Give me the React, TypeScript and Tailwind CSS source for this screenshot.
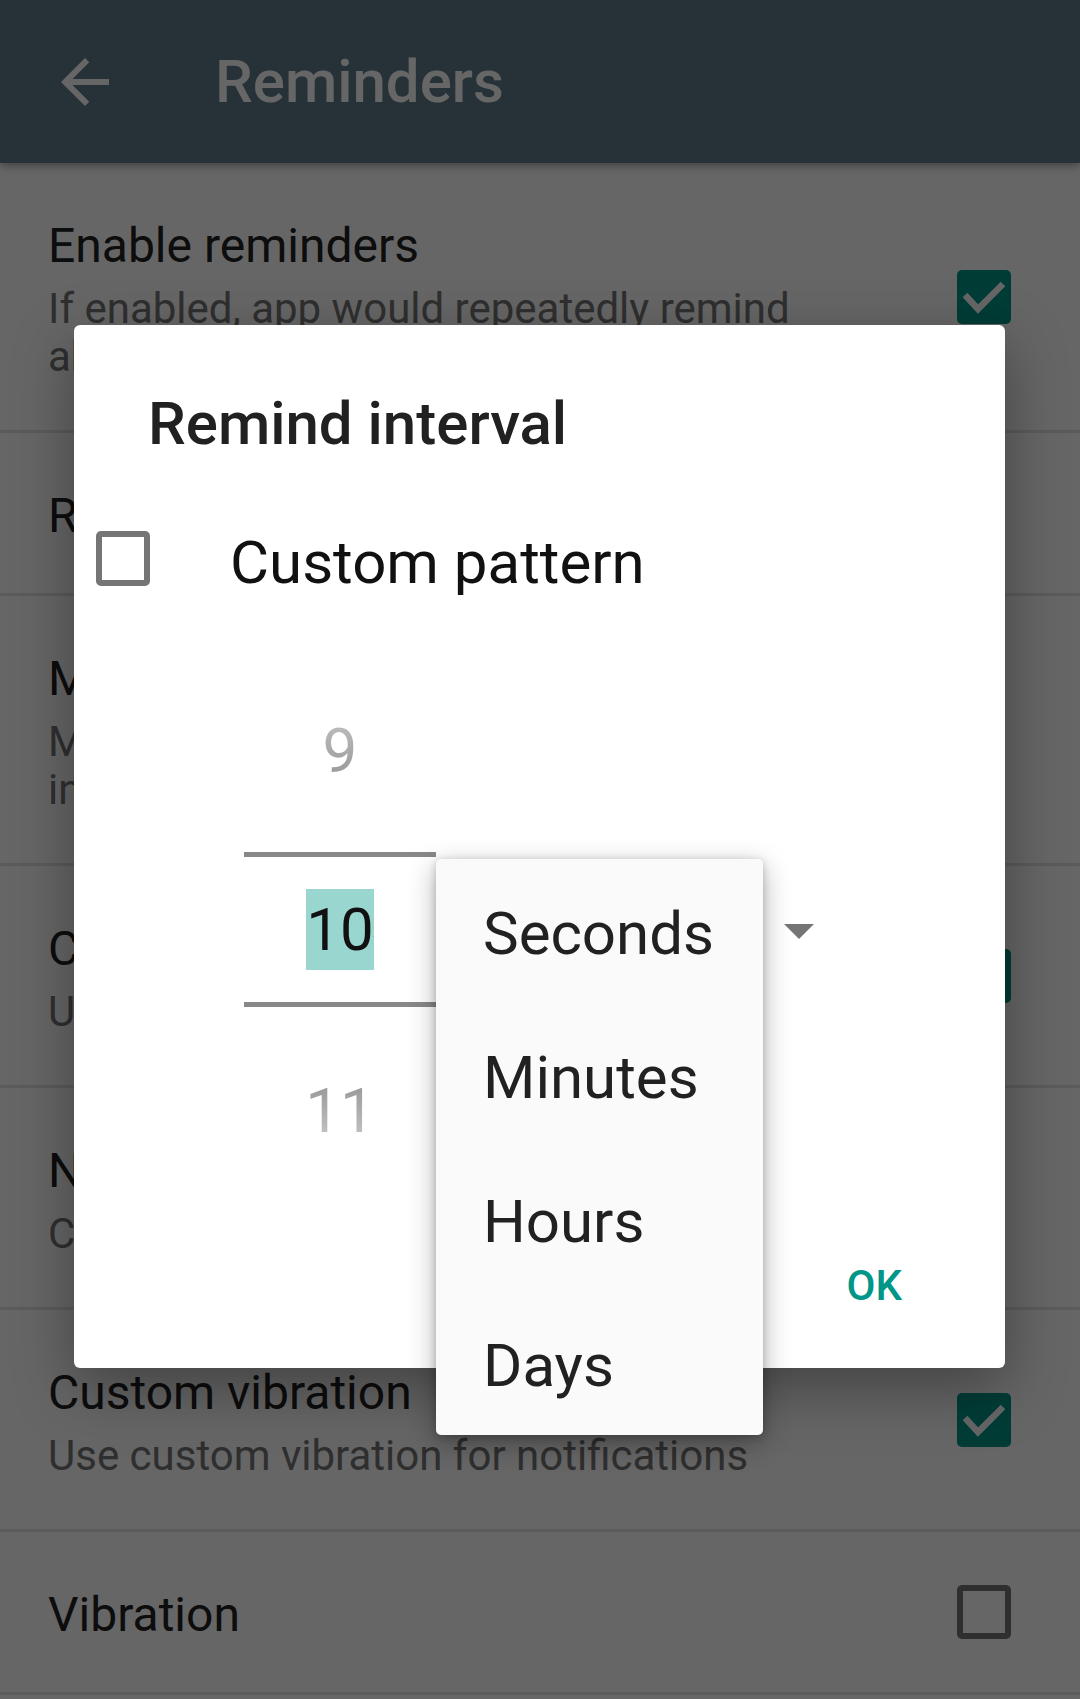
import type { ReactNode } from "react";

type Row = {
  title: string;
  summary?: string;
  check?: "on" | "off";
};

const rows: Row[] = [
  { title: "Enable reminders", summary: "If enabled, app would repeatedly remind\nabout missed notifications", check: "on" },
  { title: "Remind interval" },
  { title: "Max reminders", summary: "Maximum number of reminders, 0 for\ninfinite" },
  { title: "Custom sound", summary: "Use custom sound for notifications", check: "on" },
  { title: "Notification sound", summary: "Choose notification sound" },
  { title: "Custom vibration", summary: "Use custom vibration for notifications", check: "on" },
  { title: "Vibration", check: "off" },
];

function Check({ state }: { state: "on" | "off" }) {
  if (state === "off") {
    return <span className="block h-[54px] w-[54px] shrink-0 rounded-[5px] border-[6px] border-[#757575]" />;
  }
  return (
    <span className="flex h-[54px] w-[54px] shrink-0 items-center justify-center rounded-[5px] bg-[#009688]">
      <svg viewBox="0 0 54 54" className="h-[54px] w-[54px]">
        <polyline points="8,25 21,39 46,14" fill="none" stroke="#ffffff" strokeWidth="6.5" />
      </svg>
    </span>
  );
}

function PrefRow({ row }: { row: Row }) {
  return (
    <div className="flex items-center border-b-[3px] border-[#e3e3e3] pl-[48px] pr-[69px]">
      <div className="flex-1 pt-[55px] pb-[49px]">
        <div className="text-[48px] leading-[56px] text-[#212121]">{row.title}</div>
        {row.summary && (
          <div className="mt-[11px] whitespace-pre-line text-[42px] leading-[48px] text-[#757575]">{row.summary}</div>
        )}
      </div>
      {row.check && <Check state={row.check} />}
    </div>
  );
}

function PickerCell({ children, faded }: { children: ReactNode; faded: "top" | "bottom" }) {
  const grad =
    faded === "top"
      ? "bg-linear-to-b from-[#c2c2c2] to-[#929292]"
      : "bg-linear-to-b from-[#929292] to-[#cacaca]";
  return (
    <div className="flex h-[180px] items-center justify-center">
      <span className={`${grad} bg-clip-text text-[62px] leading-[72px] text-transparent`}>{children}</span>
    </div>
  );
}

export default function App() {
  return (
    <div className="relative h-[1699px] w-[1080px] overflow-hidden bg-white font-['Roboto',sans-serif]">
      <header className="relative z-10 flex h-[163px] items-center bg-[#607d8b] pl-[49px] shadow-[0_3px_8px_rgba(0,0,0,0.35)]">
        <svg viewBox="0 0 24 24" className="h-[72px] w-[72px]" fill="#ffffff">
          <path d="M20 11H7.83l5.59-5.59L12 4l-8 8 8 8 1.41-1.41L7.83 13H20v-2z" />
        </svg>
        <h1 className="ml-[94px] text-[60px] font-medium leading-[72px] text-white">Reminders</h1>
      </header>

      <div className="flex flex-col">
        {rows.map((r) => (
          <PrefRow key={r.title} row={r} />
        ))}
      </div>

      {/* dim behind the dialog */}
      <div className="absolute inset-0 z-20 bg-black/60" />

      <div className="absolute left-[74px] top-[325px] z-30 h-[1043px] w-[931px] rounded-[6px] bg-white shadow-[0_20px_60px_rgba(0,0,0,0.35)]">
        <h2 className="pl-[74px] pt-[63px] text-[60px] font-medium leading-[72px] text-[#212121]">Remind interval</h2>

        <label className="mt-[67px] flex items-start pl-[22px]">
          <span className="mt-[4px] block h-[55px] w-[54px] rounded-[5px] border-[6px] border-[#757575]" />
          <span className="ml-[80px] text-[60px] leading-[72px] text-[#111111]">Custom pattern</span>
        </label>

        <div className="mt-[62px] flex items-center">
          <div className="ml-[170px] flex w-[192px] flex-col">
            <PickerCell faded="top">9</PickerCell>
            <div className="flex h-[180px] flex-col">
              <div className="mt-[11px] flex h-[155px] items-center justify-center border-y-[5px] border-[#888888]">
                <span className="bg-[#99d6cf] text-[60px] leading-[81px] text-[#111111]">10</span>
              </div>
            </div>
            <PickerCell faded="bottom">11</PickerCell>
          </div>
          <div className="flex h-[144px] flex-1 items-center">
            <span className="block w-[348px]" />
            <svg viewBox="0 0 30 15" className="h-[15px] w-[30px]">
              <polygon points="0,0 30,0 15,15" fill="#757575" />
            </svg>
          </div>
        </div>

        <div className="mt-[61px] flex justify-end pr-[103px]">
          <button type="button" className="text-[42px] font-medium leading-[48px] text-[#009688]">OK</button>
        </div>

        <ul className="absolute left-[362px] top-[534px] w-[327px] rounded-[5px] bg-[#fafafa] shadow-[0_8px_28px_rgba(0,0,0,0.3),0_2px_8px_rgba(0,0,0,0.2)]">
          {["Seconds", "Minutes", "Hours", "Days"].map((u) => (
            <li key={u} className="flex h-[144px] items-center pl-[47px] pt-[5px] text-[60px] leading-[72px] text-[#212121]">
              {u}
            </li>
          ))}
        </ul>
      </div>
    </div>
  );
}
